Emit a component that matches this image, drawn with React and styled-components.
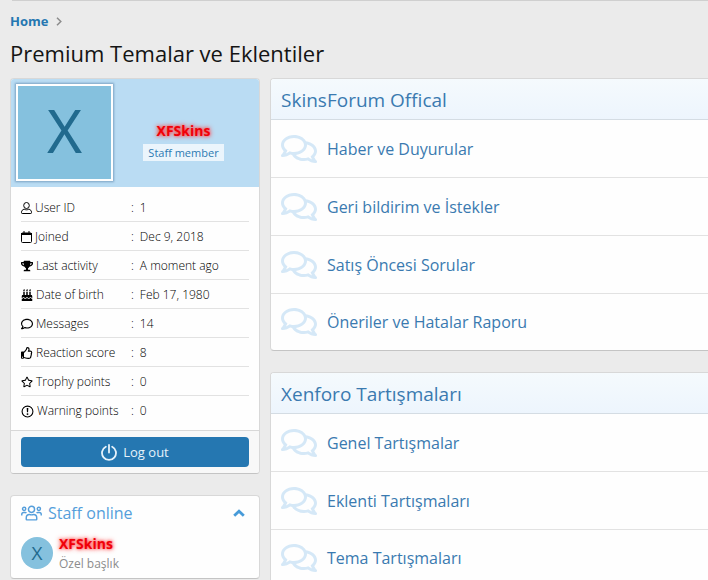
import React, { useState } from "react";
import styled, { createGlobalStyle, css } from "styled-components";
import {
  FaTrophy,
  FaBirthdayCake,
  FaRegComment,
  FaRegComments,
  FaRegThumbsUp,
  FaRegStar,
} from "react-icons/fa";

const GlobalStyle = createGlobalStyle`
  *, *::before, *::after { box-sizing: border-box; }
  body {
    margin: 0;
    background: #ebebeb;
    color: #141414;
    font: 12px/16px "Open Sans", "Noto Sans", sans-serif;
  }
  a { color: inherit; text-decoration: none; }
  h1, h2, h3, ul, ol, dl, dd, p { margin: 0; padding: 0; font-weight: inherit; }
  ul, ol { list-style: none; }
`;

const Page = styled.div`
  padding-left: 10px;
  overflow: hidden;
`;

const Breadcrumbs = styled.nav`
  display: flex;
  align-items: center;
  gap: 8px;
  margin-left: 2px;
  padding-top: 10px;
  border-top: 1px solid #cfcfcf;
  line-height: 20px;
  color: #2577b1;
  font-weight: 700;
  font-size: 13px;

  a { margin-left: -2px; }
`;

const Separator = styled.svg`
  width: 6px;
  height: 9px;
  fill: none;
  stroke: #8c8c8c;
  stroke-width: 1.5;
`;

const PageTitle = styled.h1`
  padding: 6px 0 9px;
  font-size: 22px;
  line-height: 32px;
`;

const Layout = styled.div`
  display: grid;
  grid-template-columns: 250px minmax(0, 1fr);
  column-gap: 10px;
  align-items: start;
`;

const Column = styled.div`
  display: grid;
  gap: 21px;
`;

const Card = styled.section`
  overflow: hidden;
  background: #fefefe;
  border: 1px solid #d8d8d8;
  border-bottom-color: #c4c4c4;
  border-radius: 4px;
  ${(p) =>
    p.$bleed &&
    css`
      border-right: 0;
      border-top-right-radius: 0;
      border-bottom-right-radius: 0;
    `}
`;

const MemberHeader = styled.header`
  display: flex;
  align-items: center;
  padding: 6px;
  margin: -1px -1px 0;
  background: #badcf3;
`;

const avatarColors = css`
  display: flex;
  align-items: center;
  justify-content: center;
  background: #85c1de;
  color: #216a8e;
`;

const LargeAvatar = styled.a`
  ${avatarColors}
  flex: none;
  width: 97px;
  height: 97px;
  border: 2px solid #fff;
  box-shadow: 0 0 2px 1px #7ba3c4;
  font-family: "Noto Sans", sans-serif;
  font-size: 60px;
  line-height: 88px;
  padding-bottom: 5px;
`;

const SmallAvatar = styled.a`
  ${avatarColors}
  width: 32px;
  height: 32px;
  border-radius: 50%;
  font-size: 19px;
`;

const MemberName = styled.div`
  flex: 1;
  display: grid;
  justify-items: center;
  gap: 4px;
  padding-top: 18px;
`;

const GlowName = styled.a`
  color: #f00008;
  font-size: 14px;
  line-height: 18px;
  font-weight: 700;
  text-shadow: 0 0 5px #ff2a2a, 0 0 3px #ff7070;
`;

const Banner = styled.em`
  padding: 0 5px;
  background: #ebf5fc;
  color: #2d7ab2;
  font-size: 11px;
  line-height: 17px;
  font-style: normal;
`;

const Stats = styled.dl`
  padding: 6px 10px 5px;
  color: #000;
  font-weight: 300;
`;

const Stat = styled.div`
  display: grid;
  grid-template-columns: 110px 1fr;
  align-items: center;
  height: 29px;
  padding-top: 2px;
  border-bottom: 1px solid #e2e2e2;
  &:last-child { border-bottom-color: transparent; }
`;

const Term = styled.dt`
  display: flex;
  align-items: center;
  gap: 3px;
  svg { flex: none; }
`;

const Value = styled.dd`
  display: flex;
  gap: 6px;
  &::before { content: ":"; }
`;

const CardFooter = styled.footer`
  padding: 6px 10px;
  background: #f8f8f8;
  border-top: 1px solid #d8d8d8;
`;

const LogoutButton = styled.button`
  display: flex;
  align-items: center;
  justify-content: center;
  gap: 6px;
  width: 100%;
  height: 30px;
  border: 0;
  border-radius: 4px;
  background: #2577b1;
  color: #e6f2fb;
  font: inherit;
  font-size: 13px;
  cursor: pointer;
`;

const BlockTitle = styled.h3`
  display: flex;
  align-items: center;
  gap: 6px;
  padding: 5px 10px 6px;
  color: #559edb;
  font-size: 16px;
  line-height: 24px;
`;

const Toggle = styled.button`
  display: flex;
  margin-left: auto;
  padding: 4px;
  border: 0;
  background: none;
  color: #479bd9;
  cursor: pointer;
  svg { transform: ${(p) => (p.$open ? "none" : "rotate(180deg)")}; }
`;

const StaffRow = styled.li`
  display: flex;
  align-items: center;
  gap: 6px;
  padding: 2px 10px 5px;
`;

const StaffText = styled.div`
  display: grid;
  gap: 1px;
  padding-top: 2px;
  line-height: 19px;
  color: #8c8c8c;
`;

const UserTitle = styled.span`
  font-size: 12px;
`;

const CategoryHeader = styled.h2`
  padding: 7px 10px 5px;
  background: linear-gradient(#f5fafd, #edf5fd);
  border-bottom: 1px solid #d4dce3;
  color: #3a7ab0;
  font-size: 19px;
  line-height: 28px;
`;

const Forum = styled.li`
  display: flex;
  align-items: center;
  gap: 10px;
  height: 58px;
  padding: 0 10px;
  border-bottom: 1px solid #e2e2e2;
  color: #d5e8f7;
  &:last-child { height: 56px; border-bottom: 0; }
  svg { flex: none; }
`;

const ForumTitle = styled.h3`
  color: #3a7ab0;
  font-size: 16px;
  line-height: 24px;
`;

function UserIcon(props) {
  return (
    <svg {...props} viewBox="0 0 11 12" fill="none" stroke="currentColor" aria-hidden="true">
      <ellipse cx="5.5" cy="3.500" rx="2.800" ry="3" />
      <path d="M3.200 7.200C1.600 7.500.5 8.700.5 10.200v.6c0 .4.3.7.7.7h8.600c.4 0 .7-.3.7-.7v-.6c0-1.500-1.100-2.700-2.700-3-.8.400-1.500.600-2.300.600s-1.500-.2-2.300-.6z" />
    </svg>
  );
}

function CalendarIcon(props) {
  return (
    <svg {...props} viewBox="0 0 11 12" fill="none" stroke="currentColor" aria-hidden="true">
      <rect x=".5" y="2" width="10" height="9.500" rx="1" />
      <path d="M0 3h11" strokeWidth="2" />
      <path d="M3 0v2M8 0v2" />
    </svg>
  );
}

function WarningIcon(props) {
  return (
    <svg {...props} viewBox="0 0 24 24" aria-hidden="true">
      <circle cx="12" cy="12" r="10" fill="none" stroke="currentColor" strokeWidth="2" />
      <path d="M10.5 5.5h3l-.5 8h-2z" fill="currentColor" />
      <circle cx="12" cy="16.800" r="1.700" fill="currentColor" />
    </svg>
  );
}

function PowerIcon() {
  return (
    <svg width="16" height="17" viewBox="0 0 16 17" fill="none" stroke="currentColor" strokeWidth="1.8" strokeLinecap="round" aria-hidden="true">
      <path d="M8 1v7.5M4.800 2.700a7 7 0 1 0 6.400 0" />
    </svg>
  );
}

function ChevronIcon() {
  return (
    <svg width="12" height="8" viewBox="0 0 12 8" fill="none" stroke="currentColor" strokeWidth="2.800" aria-hidden="true">
      <path d="M1.200 6.800 6 2.200l4.800 4.600" />
    </svg>
  );
}

function UsersIcon() {
  return (
    <svg width="21" height="16" viewBox="0 0 22 16" fill="none" stroke="currentColor" strokeWidth="1.5" aria-hidden="true">
      <circle cx="11" cy="4.2" r="3.2" />
      <path d="M5.5 14.6v-1.4c0-2.2 1.5-3.6 3.4-3.6.8 0 1.2.4 2.1.4s1.300-.4 2.100-.4c1.900 0 3.400 1.400 3.400 3.600v1.400c0 .4-.3.6-.6.6H6.100c-.3 0-.6-.2-.6-.6z" />
      <circle cx="3.300" cy="3.600" r="1.700" />
      <circle cx="18.700" cy="3.600" r="1.700" />
      <path d="M.8 10.500V9.600c0-1.300.8-2.100 2-2.100h1.500c.6 0 1 .2 1.400.6M21.200 10.500V9.600c0-1.300-.8-2.100-2-2.100h-1.500c-.6 0-1 .2-1.400.6" />
    </svg>
  );
}

const stats = [
  [UserIcon, 11, "User ID", "1"],
  [CalendarIcon, 11, "Joined", "Dec 9, 2018"],
  [FaTrophy, 14, "Last activity", "A moment ago"],
  [FaBirthdayCake, 11, "Date of birth", "Feb 17, 1980"],
  [FaRegComment, 13, "Messages", "14"],
  [FaRegThumbsUp, 13, "Reaction score", "8"],
  [FaRegStar, 14, "Trophy points", "0"],
  [WarningIcon, 13, "Warning points", "0"],
];

const categories = [
  {
    title: "SkinsForum Offical",
    forums: [
      "Haber ve Duyurular",
      "Geri bildirim ve İstekler",
      "Satış Öncesi Sorular",
      "Öneriler ve Hatalar Raporu",
    ],
  },
  {
    title: "Xenforo Tartışmaları",
    forums: ["Genel Tartışmalar", "Eklenti Tartışmaları", "Tema Tartışmaları"],
  },
];

function MemberCard() {
  return (
    <Card>
      <MemberHeader>
        <LargeAvatar href="#profile">X</LargeAvatar>
        <MemberName>
          <GlowName href="#profile">XFSkins</GlowName>
          <Banner>Staff member</Banner>
        </MemberName>
      </MemberHeader>
      <Stats>
        {stats.map(([Icon, width, label, value]) => (
          <Stat key={label}>
            <Term>
              <Icon width={width} height={Math.max(width, 12)} />
              {label}
            </Term>
            <Value>{value}</Value>
          </Stat>
        ))}
      </Stats>
      <CardFooter>
        <LogoutButton type="button">
          <PowerIcon />
          Log out
        </LogoutButton>
      </CardFooter>
    </Card>
  );
}

function StaffOnline() {
  const [open, setOpen] = useState(true);
  return (
    <Card>
      <BlockTitle>
        <UsersIcon />
        <a href="#staff">Staff online</a>
        <Toggle
          type="button"
          aria-label="Toggle staff online"
          aria-expanded={open}
          $open={open}
          onClick={() => setOpen(!open)}
        >
          <ChevronIcon />
        </Toggle>
      </BlockTitle>
      {open && (
        <ul>
          <StaffRow>
            <SmallAvatar href="#profile">X</SmallAvatar>
            <StaffText>
              <GlowName href="#profile">XFSkins</GlowName>
              <UserTitle>Özel başlık</UserTitle>
            </StaffText>
          </StaffRow>
        </ul>
      )}
    </Card>
  );
}

export default function App() {
  return (
    <Page>
      <GlobalStyle />
      <Breadcrumbs aria-label="Breadcrumb">
        <a href="#home">Home</a>
        <Separator viewBox="0 0 6 9" aria-hidden="true">
          <path d="M1 .8 4.800 4.500 1 8.200" />
        </Separator>
      </Breadcrumbs>
      <PageTitle>Premium Temalar ve Eklentiler</PageTitle>
      <Layout>
        <Column as="aside">
          <MemberCard />
          <StaffOnline />
        </Column>
        <Column as="main">
          {categories.map(({ title, forums }) => (
            <Card key={title} $bleed>
              <CategoryHeader>
                <a href="#category">{title}</a>
              </CategoryHeader>
              <ul>
                {forums.map((name) => (
                  <Forum key={name}>
                    <FaRegComments size={36} />
                    <ForumTitle>
                      <a href="#forum">{name}</a>
                    </ForumTitle>
                  </Forum>
                ))}
              </ul>
            </Card>
          ))}
        </Column>
      </Layout>
    </Page>
  );
}
